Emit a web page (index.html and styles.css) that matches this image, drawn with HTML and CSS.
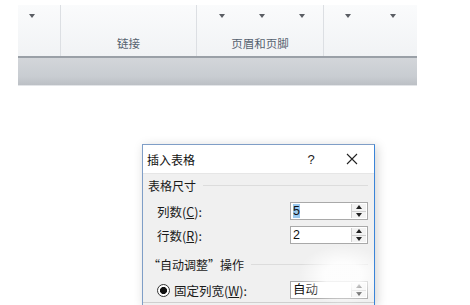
FILE: index.html
```html
<!DOCTYPE html>
<html lang="zh">
<head>
<meta charset="utf-8">
<link rel="stylesheet" href="styles.css">
</head>
<body>
<div class="ribbon">
  <div class="groups">
    <div class="group g1"><div class="arrows"><span class="arr"></span></div></div>
    <div class="group g2"><div class="arrows"></div><div class="label">链接</div></div>
    <div class="group g3"><div class="arrows"><span class="arr"></span><span class="arr"></span><span class="arr"></span></div><div class="label">页眉和页脚</div></div>
    <div class="group g4"><div class="arrows"><span class="arr"></span><span class="arr"></span></div></div>
  </div>
  <div class="bar"></div>
</div>

<div class="dialog">
  <div class="titlebar">
    <span class="title">插入表格</span>
    <span class="help">?</span>
    <svg class="close" width="12" height="12" viewBox="0 0 12 12"><path d="M1 1 L11 11 M11 1 L1 11" stroke="#222" stroke-width="1.1" fill="none"/></svg>
  </div>
  <div class="body">
    <div class="section"><span>表格尺寸</span><span class="line"></span></div>
    <div class="row r1">
      <span class="lbl">列数(<u>C</u>):</span>
      <div class="spin"><span class="val"><span class="sel">5</span></span><span class="btns"><span class="up"></span><span class="dn"></span></span></div>
    </div>
    <div class="row">
      <span class="lbl">行数(<u>R</u>):</span>
      <div class="spin"><span class="val">2</span><span class="btns"><span class="up"></span><span class="dn"></span></span></div>
    </div>
    <div class="section s2"><span>“自动调整”操作</span><span class="line"></span></div>
    <div class="row r3">
      <span class="lbl radio"><span class="rb"></span>固定列宽(<u>W</u>):</span>
      <div class="spin"><span class="val">自动</span><span class="btns"><span class="up"></span><span class="dn"></span></span></div>
    </div>
    <div class="divider"></div>
    <div class="wm"></div>
  </div>
</div>
</body>
</html>
```
FILE: styles.css
```css
* { box-sizing: border-box; }
html, body { margin: 0; padding: 0; background: #fff; overflow: hidden; }
body {
  width: 470px; height: 305px;
  font-family: "Noto Sans CJK SC", "Noto Sans", sans-serif;
  padding: 5px 0 0 18px;
}
.ribbon { width: 399px; }
.groups {
  display: flex; height: 51px;
  background: linear-gradient(#fafbfc, #f1f3f5);
}
.group { border-right: 1px solid #dcdfe3; display: flex; flex-direction: column; align-items: center; }
.group.g4 { border-right: none; }
.g1 { width: 43px; align-items: flex-start; }
.g2 { width: 136px; }
.g3 { width: 127px; }
.g4 { flex: 1; align-items: flex-start; }
.arrows { height: 25px; display: flex; gap: 34px; padding-top: 8px; align-self: stretch; }
.g1 .arrows { padding-left: 11px; }
.g3 .arrows { padding-left: 22px; }
.g4 .arrows { padding-left: 21px; gap: 39px; }
.arr {
  width: 0; height: 0;
  border-left: 3px solid transparent; border-right: 3px solid transparent;
  border-top: 4px solid #5a5e64;
  margin-top: 1px;
}
.label { font-size: 11.5px; color: #56626f; line-height: 14px; margin-top: 6px; }
.bar {
  height: 30px;
  border-top: 2px solid #9aa0a7;
  background: linear-gradient(#d3d6da, #c8ccd1 70%, #bcc0c5);
  border-bottom: 1px solid #e3e5e8;
}

.dialog {
  margin: 58px 0 0 124px;
  width: 233px; height: 161px;
  border: 1px solid #7f9ec7;
  border-right-color: #3a84d8;
  border-bottom: none;
  background: #f0f0f0;
  box-shadow: 2px 2px 10px rgba(0,0,0,0.18);
  position: relative;
  overflow: hidden;
}
.titlebar {
  height: 29px; background: #fff; display: flex; align-items: center;
  border-bottom: 1px solid #e6e6e6;
  padding-left: 4px;
}
.title { font-size: 12px; color: #111; flex: 1; }
.help { font-size: 13px; color: #222; width: 14px; text-align: center; font-family: "Liberation Sans", sans-serif; }
.close { margin: 0 16px 0 28px; }
.body { padding: 3px 6px 0 5px; }
.section { display: flex; align-items: center; height: 16px; font-size: 12px; color: #1a1a1a; }
.section .line { flex: 1; height: 1px; background: #dcdcdc; margin-left: 7px; }
.section.s2 { margin-top: 9px; }
.row { display: flex; align-items: center; justify-content: space-between; height: 24px; padding-left: 9px; }
.row.r1 { margin-top: 6px; }
.row.r3 { margin-top: 6px; }
.lbl { font-size: 12.5px; color: #1a1a1a; display: flex; align-items: center; }
.lbl u { text-decoration: underline; text-underline-offset: 1px; }
.radio .rb {
  width: 13px; height: 13px; border-radius: 50%; border: 1px solid #333;
  background: radial-gradient(circle, #111 0 3.3px, #fff 3.8px);
  margin-right: 4px;
}
.spin {
  width: 78px; height: 18px; background: #fff; border: 1px solid #a9a9a9;
  display: flex; align-items: stretch;
}
.val { flex: 1; font-size: 12.5px; line-height: 16px; padding-left: 2px; color: #111; font-family: "Liberation Sans", "Noto Sans CJK SC", sans-serif; }
.sel { background: #99c9ef; }
.btns { width: 15px; display: flex; flex-direction: column; border-left: 1px solid #d0d0d0; margin: 1px; background: #f3f3f3; }
.btns span { flex: 1; display: flex; align-items: center; justify-content: center; }
.btns .up { border-bottom: 1px solid #cfcfcf; }
.btns .up::after { content: ""; border-left: 3px solid transparent; border-right: 3px solid transparent; border-bottom: 4px solid #222; }
.btns .dn::after { content: ""; border-left: 3px solid transparent; border-right: 3px solid transparent; border-top: 4px solid #222; }
.divider { height: 1px; background: #cfcfcf; margin: 0 -6px 0 -5px; }
.wm {
  position: absolute; left: 155px; top: 100px; width: 90px; height: 60px;
  background: radial-gradient(ellipse at center, rgba(255,255,255,0.85) 30%, rgba(255,255,255,0) 70%);
}
```
